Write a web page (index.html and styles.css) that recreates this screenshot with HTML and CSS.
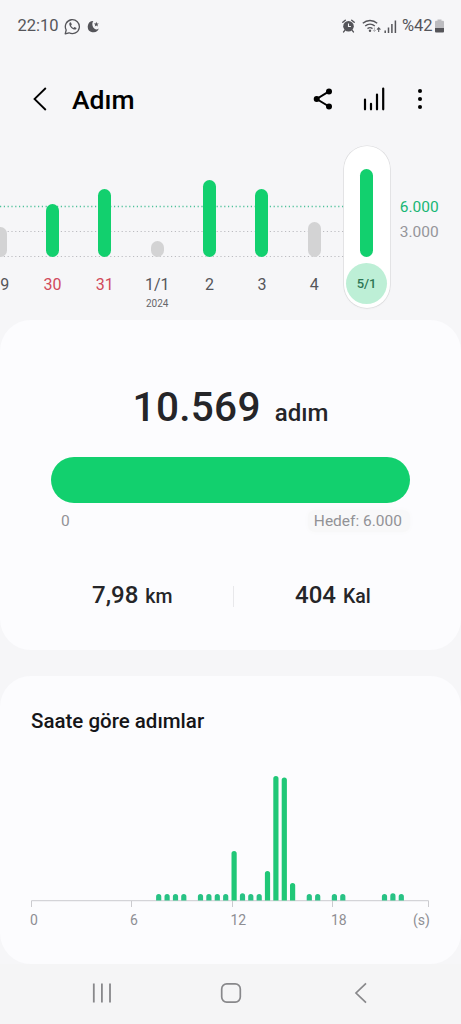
FILE: index.html
```html
<!DOCTYPE html>
<html lang="tr">
<head>
<meta charset="utf-8">
<title>Adım</title>
<link rel="stylesheet" href="styles.css">
</head>
<body>
<div class="screen">
  <div class="status">
    <span class="clock">22:10</span>
    <svg class="wa" width="17" height="17" viewBox="0 0 17 17" fill="none" stroke="#55555a" stroke-width="1.3">
      <path d="M1.2 15.8l1-3.8A7 7 0 1 1 5 14.8z" stroke-linejoin="round"/>
      <path d="M6.1 4.3c-1.6 1.2-.7 3.6 1 5.4 1.7 1.7 4 2.6 5.2 1.2l.2-1-1.9-1-1.2 1c-1-.4-2-1.4-2.4-2.4l.8-1.1-.8-1.900z" fill="#55555a" stroke="none"/>
    </svg>
    <svg class="moon" width="13" height="13" viewBox="0 0 13 13" fill="#55555a">
      <path d="M6.300.9A5.700 5.700 0 1 0 11.800 8.600a3.800 3.800 0 0 1-5.300-.9C4.900 5.700 5 2.600 6.300.9z"/>
      <path d="M9.300 1.700l.7 1.700 1.800.1-1.400 1.200.5 1.700-1.600-.9-1.500.9.4-1.700-1.300-1.200 1.700-.1z"/>
    </svg>
    <span class="spacer"></span>
    <svg width="13" height="14" viewBox="0 0 13 14">
      <circle cx="6.500" cy="7.300" r="5.300" fill="#55555a"/>
      <path d="M.8 3.300L3.300 1.200M12.200 3.300L9.700 1.200M2.800 11.300l-1.200 1.600M10.200 11.300l1.200 1.600" stroke="#55555a" stroke-width="1.400" stroke-linecap="round"/>
      <path d="M6.500 4.500v3h2.400" fill="none" stroke="#f6f6f8" stroke-width="1.100"/>
    </svg>
    <svg class="wifi" width="20" height="14" viewBox="0 0 20 14" fill="none" stroke="#55555a" stroke-width="1.400">
      <path d="M.8 4.200a11 11 0 0 1 14.400 0M3.200 7a7.500 7.500 0 0 1 9.600 0M5.500 9.600a4 4 0 0 1 5 0"/>
      <circle cx="8" cy="11.800" r="1.200" fill="#55555a" stroke="none"/>
      <path d="M12.400 8.500v4M10.900 11l1.500 1.600 1.500-1.600" stroke="#b5b5b9" stroke-width="1"/>
      <path d="M16.700 13V9M15 10.600l1.700-1.900 1.700 1.900" stroke-width="1.100"/>
    </svg>
    <svg class="signal" width="13" height="13" viewBox="0 0 13 13" stroke="#55555a" stroke-width="1.500">
      <path d="M1.200 13v-2.500M4.500 13V7.500M7.900 13V4M11.400 13V.4"/>
    </svg>
    <span class="percent">%42</span>
    <svg class="battery" width="9" height="14" viewBox="0 0 9 14">
      <path d="M2.500.5h4v1.300H8a1 1 0 0 1 1 1V9H0V2.800a1 1 0 0 1 1-1h1.500z" fill="#bcbcc0"/>
      <path d="M0 9h9v3.500a1 1 0 0 1-1 1H1a1 1 0 0 1-1-1z" fill="#55555a"/>
    </svg>
  </div>

  <header class="header">
    <svg class="back" width="16" height="26" viewBox="0 0 16 26" fill="none" stroke="#000" stroke-width="1.800">
      <path d="M13.800 2L2.500 13l11.300 11"/>
    </svg>
    <h1 class="title">Adım</h1>
    <span class="spacer"></span>
    <svg width="20" height="22" viewBox="0 0 20 22">
      <path d="M16 3.300L3.700 11 16 18.500" fill="none" stroke="#000" stroke-width="2"/>
      <circle cx="3.700" cy="11" r="3"/><circle cx="16" cy="3.400" r="3"/><circle cx="16" cy="18.400" r="3"/>
    </svg>
    <svg class="chart-icon" width="23" height="24" viewBox="0 0 23 24" stroke="#000" stroke-width="2.200" stroke-linecap="round">
      <path d="M2 22.300V12.600M8 22.300v-5.500M14 22.300V7.500M20.200 22.300V1.600"/>
    </svg>
    <svg class="more" width="6" height="22" viewBox="0 0 6 22">
      <circle cx="3" cy="3" r="2.050"/><circle cx="3" cy="11" r="2.050"/><circle cx="3" cy="19" r="2.050"/>
    </svg>
  </header>

  <section class="days">
    <svg class="gridlines" width="344" height="56" viewBox="0 0 344 56" fill="none" stroke-width="1" stroke-dasharray="1.200 2.600">
      <path d="M0 2.500h344" stroke="#4fc19a" stroke-width="1.300"/>
      <path d="M0 27.500h344M0 52.500h344" stroke="#bcbcc0"/>
    </svg>
    <div class="columns">
      <div class="day"><i class="bar low" style="height:30px"></i><span class="date partial">9</span></div>
      <div class="day"><i class="bar" style="height:53px"></i><span class="date holiday">30</span></div>
      <div class="day"><i class="bar" style="height:68px"></i><span class="date holiday">31</span></div>
      <div class="day"><i class="bar low" style="height:16px"></i><span class="date">1/1</span><span class="year">2024</span></div>
      <div class="day"><i class="bar" style="height:77px"></i><span class="date">2</span></div>
      <div class="day"><i class="bar" style="height:68px"></i><span class="date">3</span></div>
      <div class="day"><i class="bar low" style="height:35px"></i><span class="date">4</span></div>
      <div class="day selected"><i class="bar" style="height:88px"></i><span class="date">5/1</span></div>
    </div>
    <div class="scale"><span class="goal">6.000</span><span>3.000</span></div>
  </section>

  <section class="card summary">
    <p class="total"><span class="count">10.569</span><span class="unit">adım</span></p>
    <div class="progress"></div>
    <div class="range"><span>0</span><span class="target">Hedef: 6.000</span></div>
    <div class="stats">
      <p class="stat distance">7,98<small>km</small></p>
      <i class="divider"></i>
      <p class="stat energy">404<small>Kal</small></p>
    </div>
  </section>

  <section class="card hourly">
    <h2 class="subtitle">Saate göre adımlar</h2>
    <svg class="plot" width="461" height="140" viewBox="0 770 461 140" fill="none">
      <path d="M31.500 907v-6.300h397v6.300M131.500 901v6M232.500 901v6M332.500 901v6" stroke="#cbcbcf"/>
      <g fill="#20c777">
        <path d="M231.500 900.500V853.500a2.600 2.600 0 0 1 5.200 0V900.500zM264.900 900.500V873.500a2.600 2.600 0 0 1 5.200 0V900.500zM273.300 900.500V778.500a2.600 2.600 0 0 1 5.200 0V900.500zM281.700 900.500V780a2.600 2.600 0 0 1 5.200 0V900.500zM290 900.500V885.500a2.600 2.600 0 0 1 5.200 0V900.500z"/>
      </g>
      <g fill="#28c284">
        <path d="M156.100 900.500v-4a2.600 2.600 0 0 1 5.200 0v4zM164.500 900.500v-4a2.600 2.600 0 0 1 5.200 0v4zM172.900 900.500v-4a2.600 2.600 0 0 1 5.200 0v4zM181.200 900.500v-4a2.600 2.600 0 0 1 5.200 0v4zM197.900 900.500v-4a2.600 2.600 0 0 1 5.200 0v4zM206.300 900.500v-4a2.600 2.600 0 0 1 5.200 0v4zM214.700 900.500v-4a2.600 2.600 0 0 1 5.200 0v4zM223.100 900.500v-4a2.600 2.600 0 0 1 5.200 0v4z"/>
        <path d="M239.900 900.500v-4.600a2.600 2.600 0 0 1 5.200 0v4.600zM248.200 900.500v-4a2.600 2.600 0 0 1 5.200 0v4zM256.600 900.500v-4a2.600 2.600 0 0 1 5.200 0v4zM306.700 900.500v-4a2.600 2.600 0 0 1 5.200 0v4zM315.100 900.500v-4a2.600 2.600 0 0 1 5.200 0v4zM331.800 900.500v-4a2.600 2.600 0 0 1 5.200 0v4zM340.200 900.500v-4a2.600 2.600 0 0 1 5.200 0v4zM381.900 900.500v-4a2.600 2.600 0 0 1 5.200 0v4zM390.300 900.500v-4.600a2.600 2.600 0 0 1 5.200 0v4.600zM398.700 900.500v-4a2.600 2.600 0 0 1 5.200 0v4z"/>
      </g>
    </svg>
    <div class="hours"><span>0</span><span>6</span><span>12</span><span>18</span><span class="hour-unit">(s)</span></div>
  </section>

  <nav class="nav">
    <svg width="20" height="20" viewBox="0 0 20 20" stroke="#88888b" stroke-width="1.800"><path d="M1.800.5v19M9.900.5v19M18 .5v19"/></svg>
    <svg class="home" width="22" height="22" viewBox="0 0 22 22" fill="none" stroke="#88888b" stroke-width="1.700"><rect x="1.700" y="1.900" width="18.600" height="18.200" rx="5"/></svg>
    <svg class="prev" width="14" height="22" viewBox="0 0 14 22" fill="none" stroke="#88888b" stroke-width="1.700"><path d="M12 1.300L2 11l10 9.700"/></svg>
  </nav>
</div>
</body>
</html>
```

FILE: styles.css
```css
* { box-sizing: border-box; }
body { margin: 0; background: #f6f6f8; font-family: Roboto, "Liberation Sans", sans-serif; color: #252528; }
h1, h2, p { margin: 0; font-weight: 500; }
svg { display: block; flex: none; }
.screen { width: 461px; height: 1024px; overflow: hidden; display: flex; flex-direction: column; }
.spacer { flex: 1; }

.status { height: 52px; padding: 0 17px; display: flex; align-items: center; color: #55555a; font-size: 16.500px; line-height: 20px; }
.clock { width: 47px; padding-left: .5px; }
.moon { margin-left: 6px; }
.wifi { margin-left: 7px; }
.signal { margin-left: 2px; }
.percent { margin-left: 5px; width: 31px; }
.battery { margin-left: 2px; }

.header { height: 94px; padding: 0 38px 0 32px; display: flex; align-items: center; color: #000; }
.title { margin-left: 24px; padding-top: 2px; font-size: 26.500px; line-height: 32px; }
.chart-icon { margin-left: 30px; }
.more { margin-left: 31px; }

.days { height: 174px; position: relative; display: flex; }
.gridlines { position: absolute; left: 0; top: 58px; }
.columns { position: relative; display: grid; grid-template-columns: repeat(8, 52.350px); margin-left: -26px; height: 163px; }
.day { display: grid; grid-template-rows: 110.500px 56px; justify-items: center; align-items: end; position: relative; }
.bar { width: 13px; border-radius: 7px; background: #12d06e; }
.low { background: #d3d3d4; }
.date { align-self: center; font-size: 16px; line-height: 20px; color: #55555a; }
.partial { padding-left: 9px; }
.holiday { color: #d1495b; }
.year { position: absolute; top: 152px; font-size: 10px; line-height: 12px; color: #66666a; }
.selected { width: 46px; height: 162px; justify-self: center; grid-template-rows: 110.500px 51.500px; background: #fff; border-radius: 23px; box-shadow: 0 0 0 .6px #d9d9db, 0 1px 2px #0000000d; }
.selected .date { width: 41px; height: 41px; border-radius: 50%; background: #bdefd6; display: grid; place-items: center; font-size: 13px; font-weight: 500; color: #2e7754; margin-top: 3px; }
.scale { padding: 49px 0 0 7px; font-size: 15.500px; line-height: 25px; color: #95959a; display: flex; flex-direction: column; }
.goal { color: #18b674; }

.card { background: #fcfcfe; border-radius: 31px; }
.summary { height: 330px; padding-top: 62px; }
.total { height: 50px; display: flex; justify-content: center; align-items: baseline; line-height: 50px; }
.count { font-size: 40.500px; letter-spacing: .3px; }
.unit { margin-left: 14px; font-size: 24px; }
.progress { margin: 25px 51px 0; height: 46px; border-radius: 23px; background: #12d06e; }
.range { margin: 7px 51px 0 61px; display: flex; justify-content: space-between; font-size: 15.500px; line-height: 22px; color: #929296; }
.target { padding: 0 8px 0 6px; border-radius: 7px; background: #f8f8f9; box-shadow: 0 0 5px #f8f8f9; }
.stats { margin-top: 50px; display: grid; grid-template-columns: 233px 1px 1fr; align-items: center; height: 26px; }
.stat { font-size: 24px; line-height: 26px; white-space: nowrap; }
.stat small { margin-left: 7px; font-size: 19.500px; }
.distance { padding-left: 92px; }
.energy { padding-left: 61px; }
.divider { height: 21px; background: #e8e8eb; }

.hourly { margin-top: 26px; height: 288px; padding-top: 33px; }
.subtitle { margin-left: 31px; font-size: 20.500px; line-height: 24px; color: #151518; }
.plot { margin-top: 37px; }
.hours { padding: 0 0 0 30px; display: grid; grid-template-columns: 100px 100.500px 100.500px 82px 1fr; font-size: 14px; line-height: 20px; color: #8e8e93; }

.nav { height: 60px; padding: 0 93px 2px 92px; background: #f5f5f6; display: flex; align-items: center; }
.home { margin-left: 108px; }
.prev { margin-left: 112px; }
```
